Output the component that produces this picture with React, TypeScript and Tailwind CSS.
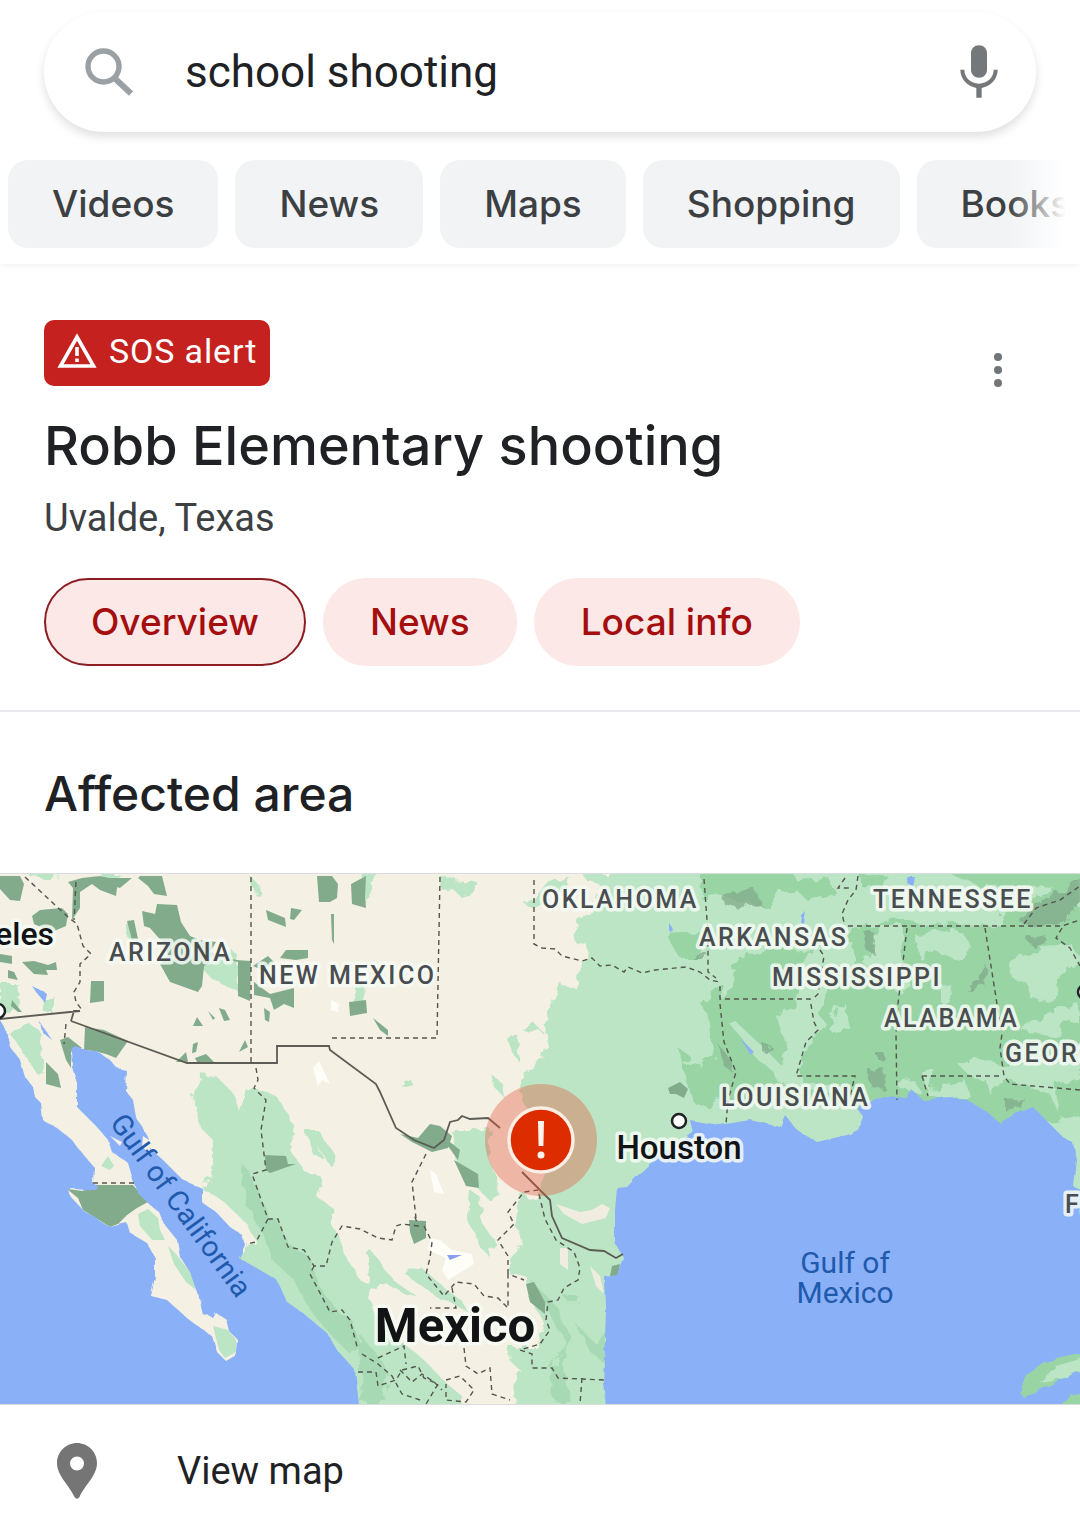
import { useState } from 'react';
import { clsx } from 'clsx';

const searchTabs = ['Videos', 'News', 'Maps', 'Shopping', 'Books'];
const alertTabs = ['Overview', 'News', 'Local info'];

interface MapLabel {
  name: string;
  x: number;
  y: number;
}

const states: MapLabel[] = [
  { name: 'OKLAHOMA', x: 542, y: 34 },
  { name: 'TENNESSEE', x: 873, y: 34 },
  { name: 'ARKANSAS', x: 699, y: 72 },
  { name: 'ARIZONA', x: 109, y: 87 },
  { name: 'NEW MEXICO', x: 259, y: 110 },
  { name: 'MISSISSIPPI', x: 772, y: 112 },
  { name: 'ALABAMA', x: 884, y: 153 },
  { name: 'GEORGIA', x: 1005, y: 188 },
  { name: 'LOUISIANA', x: 721, y: 232 },
  { name: 'FLORIDA', x: 1065, y: 339 },
];

function SearchIcon() {
  return (
    <svg viewBox="0 0 48 48" className="h-12 w-12 shrink-0" fill="none" stroke="#9aa0a3" aria-hidden="true">
      <circle cx="18.500" cy="18.500" r="15.500" strokeWidth="5.400" />
      <path d="M30.500 31L46 45.500" strokeWidth="6" />
    </svg>
  );
}

function MicIcon() {
  return (
    <svg viewBox="0 0 24 24" className="h-16 w-16" fill="#74787b" aria-hidden="true">
      <path d="M12 14.200c1.700 0 3-1.300 3-3V5c0-1.700-1.300-3-3-3S9 3.300 9 5v6.200c0 1.700 1.300 3 3 3z" />
      <path d="M17.500 11.200c0 3-2.500 5.200-5.500 5.200s-5.500-2.200-5.500-5.200H5c0 3.500 2.700 6.300 6 6.800v3.700h2V18c3.300-.5 6-3.300 6-6.800z" />
    </svg>
  );
}

function WarningIcon() {
  return (
    <svg viewBox="0 0 40 36" className="h-9 w-10" aria-hidden="true">
      <path d="M20 4L36.500 33H3.500z" fill="none" stroke="white" strokeWidth="3.600" />
      <path d="M20 14v9M20 25.500v3.500" stroke="white" strokeWidth="3.600" />
    </svg>
  );
}

function PinIcon() {
  return (
    <svg viewBox="0 0 40 56" className="h-14 w-10" aria-hidden="true">
      <path
        fillRule="evenodd"
        fill="#757575"
        d="M20 0C9 0 0 9 0 20c0 13 13 23 17.500 34q2.500 3.500 5 0C27 43 40 33 40 20 40 9 31 0 20 0zm0 13.500a7 7 0 1 1 0 14 7 7 0 0 1 0-14z"
      />
    </svg>
  );
}

function AffectedMap() {
  return (
    <svg viewBox="0 0 1080 530" className="block w-full" fontFamily="Roboto, sans-serif" role="img" aria-label="Map of the affected area">
      <defs>
        <filter id="rough" x="0" y="0" width="1080" height="530" filterUnits="userSpaceOnUse">
          <feTurbulence type="fractalNoise" baseFrequency="0.07" numOctaves="3" seed="4" />
          <feDisplacementMap in="SourceGraphic" scale="14" />
        </filter>
        <filter id="coast" x="0" y="0" width="1080" height="530" filterUnits="userSpaceOnUse">
          <feTurbulence type="fractalNoise" baseFrequency="0.09" numOctaves="2" seed="9" />
          <feDisplacementMap in="SourceGraphic" scale="5" />
        </filter>
      </defs>
      <rect width="1080" height="530" fill="#f4f0e4" />

      {/* Lowland vegetation */}
      <g fill="#bbe5c5" filter="url(#rough)">
        <path d="M612-10L600 16 585 39 573 59 575 68 587 69 586 86 577 96 575 114 559 113 547 133 545 163 542 186 529 194 521 209 518 222 540 250 545 300 535 325 522 322 517 346 520 369 508 383 508 399 529 405 530 425 545 450 537 473 510 473 512 489 520 496 513 509 517 545H1100V-10z" />
        <path d="M200 199L193 223 200 253 213 266 212 299 203 316 222 326 250 353 256 369 236 384 300 440 350 500 355 545H467L463 523 443 506 427 489 403 469 385 450 372 436 370 409 360 406 347 383 334 353 332 333 317 323 322 303 303 296 290 276 297 263 287 239 277 223 263 216 247 216 241 239 233 219 217 203z" />
        <path d="M305 256L318 256 334 280 336 291 330 292 318 272 324 285 312 280z" />
        <path d="M450 256L492 256 488 283 498 306 497 319 487 324 477 313 457 293z" />
        <path d="M470 316L483 326 480 343 495 369 487 374 488 383 480 370 468 346z" />
        <path d="M405 400L420 392 440 410 460 425 470 440 455 432 430 418z" />
        <path d="M370 375L392 405 420 425 405 420 385 408 365 420z" />
        <path d="M442 4L478 8 478 16 460 22 452 14 442 16z" />
        <path d="M525 30L538 20 550 5 570 4 560 16 545 28 530 34zM582-2L612-2 608 14 590 10z" />
        <path d="M521 154L535 150 543 158 530 160zM508 166L520 163 519 188 512 178zM493 202L503 210 505 224 497 216zM403 214L408 203 413 211z" />
        <path d="M0 110L18 110 20 130 12 138 0 142zM10 160L25 146 38 155 45 200 35 198 22 175z" />
        <path d="M200 92L235 78 240 118 215 108zM44 124L54 122 54 140 46 140z" />
        <path d="M370-5L380-5 370 20 362 30 360 12zM354 110L364 110 366 138 354 128z" />
        <path d="M24-5L60-5 50 6 30 2zM100 0L120 0 112 12zM125 50L132 48 136 66 126 62zM252 4L260 12 254 20z" />
      </g>

      {/* Eastern forests */}
      <g fill="#98d4a4" filter="url(#rough)">
        <path d="M722 109L700 129 710 153 714 183 684 193 688 213 698 233 720 226 740 228 865 234 875 222 1000 255 1100 240V40L1060 30 1040 48 980 52 930 50 900 46 862 52 838 62 800 76 770 72 740 84z" />
        <path d="M700-5L790-5 800 12 780 20 770 34 740 28 720 20 700 24zM790 10L830 4 835 18 805 24z" />
        <path d="M666 60L700 58 698 84 680 84 672 72z" />
        <path d="M860 0L890 4 880 14 860 12zM940-5L1080-5 1080 20 1040 12 990 14 960 6zM1000 40L1030 22 1080 8V50H1000z" />
        <path d="M676 172L690 182 685 192z" />
      </g>

      {/* Clearings inside the forest */}
      <g fill="#bbe5c5" filter="url(#rough)">
        <path d="M806 76L850 66 856 86 838 98 822 120 818 140 824 148 808 170 800 190 800 206 838 212 836 222 780 210 772 196 756 184 738 160 726 146 734 146 766 176 780 190 788 170 780 156 776 142 792 134 800 112z" />
        <path d="M880 52L905 52 903 86 910 112 900 120 886 110 866 92 872 70z" />
        <path d="M914 60L960 56 972 74 960 88 936 78 918 84z" />
        <path d="M1008 88L1040 72 1072 70 1080 86 1062 104 1052 128 1032 126 1028 110 1012 104z" />
        <path d="M830 142L846 130 848 150 836 162 828 154z" />
        <path d="M940 110L948 108 950 130 942 130zM956 188L976 184 996 190 1010 194 1040 184 1080 180V206L1054 208 1060 240 1050 220 1010 206 1000 202 992 222 984 204 970 202z" />
        <path d="M1034 150L1062 134 1080 130V150L1062 148 1058 164 1020 156z" />
        <path d="M892 206L912 204 922 220 900 214zM920 196L934 196 930 216 965 206 970 222 930 224z" />
        <path d="M720 90L738 98 732 118 724 128z" />
        <path d="M724 246L750 226 780 234 830 226 860 234 855 262 812 270 796 256 786 240 780 254z" />
      </g>

      {/* Darker western lowland shading */}
      <g fill="#9fd6ad" opacity="0.7" filter="url(#rough)">
        <path d="M240 288L252 300 268 344 276 345 288 370 310 384 318 410 338 438 352 446 362 476 350 480 330 460 310 436 292 404 270 384 262 358 246 330z" />
        <path d="M530 405L550 440 566 470 552 496 556 528 570 528 562 490 570 462 556 432z" />
        <path d="M576 450L590 478 606 490 606 456 596 470zM562 420L578 422 580 430 566 426z" />
        <path d="M360 460L376 480 388 500 380 530 362 530z" />
      </g>

      {/* Parks and reserves */}
      <g fill="#82ab8c">
        <path d="M0 2H20L24 10 20 27 10 26 0 15zM32 42L40 36 62 34 68 40 66 52 52 58 34 50zM0 80L12 82 12 90 0 88zM22 88L34 87 48 91 56 88 57 96 46 96 48 101 34 100zM8 96L14 98 18 106 8 104zM12 126L22 138 18 138 11 132z" />
        <path d="M68 8L82 4 100 2 118 6 116 22 100 16 92 10 80 18 80 34 72 46 73 14zM140 2L162 2 167 22 154 20 148 12 138 4zM98 4L132 4 120 14 108 10z" />
        <path d="M127 47L134 46 138 65 132 66zM142 37L155 40 157 30 177 31 181 48 190 62 200 66 216 68 210 78 236 86 251 87 250 127 238 122 238 88 220 84 204 92 202 112 198 118 170 108 160 90 168 82 164 70 150 54 144 52z" />
        <path d="M253 92L268 82 274 88 262 96zM280 84L286 76 308 76 308 84 296 86zM254 108L270 120 294 114 294 134 284 130 274 136 270 124 254 121zM264 134L270 138 269 148 265 146z" />
        <path d="M91 107L104 107 104 127 90 129zM193 152L197 143 203 152zM208 137L215 144 213 146zM219 134L225 136 230 146 224 147zM193 170L198 168 196 178 192 179zM239 178L245 166 248 173zM195 184L206 180 214 188H197zM176 188L186 178 188 188z" />
        <path d="M317 2L332 2 338 10 337 24 330 28 319 28zM351 10L366 2 365 24 366 34 352 30zM266 36L285 44 286 53 268 46zM291 34L302 36 294 46 290 45zM331 40L334 40 334 70 332 66z" />
        <path d="M349 128L366 126 367 139 350 142zM373 144L388 156 388 162 380 156z" />
        <path d="M85 153L104 156 128 167 116 184 106 180 94 177 84 176zM60 166L68 163 82 174 71 176 71 194 66 186zM46 188L58 200 61 214 46 210z" />
        <path d="M67 315L83 317 94 311 133 311 148 328 137 334 127 341 118 350 110 353 83 336 78 324z" />
        <path d="M265 281L286 282 288 290 296 290 270 299 266 296z" />
        <path d="M400 260L418 264 430 250 440 252 452 262 448 274 432 278 412 268zM445 264L460 276 458 286 448 272zM454 286L478 300 479 314 466 312z" />
        <path d="M409 346L426 347 426 364 414 370 410 358zM526 410L534 408 545 428 545 440 530 428zM612 392L620 390 618 402 610 402z" />
        <path d="M668 214L680 208 688 215 684 224 676 220 670 220z" />
      </g>
      <g fill="#82ab8c" opacity="0.75" filter="url(#rough)">
        <path d="M722 20L756 16 762 32 740 34 724 30zM1020 46L1036 30 1060 16 1084 4V30L1060 50 1040 52 1022 50zM864 58L875 58 872 78 866 76zM968 118L985 90 988 100 976 116zM868 196L884 194 886 216 872 214zM1006 226L1024 224 1020 236 1006 238zM765 172L772 172 770 182 765 180zM718 170L734 190 736 202 722 190zM694 78L706 78 704 86 692 84zM878 180L886 180 886 186 878 186zM1028 64L1044 60 1042 70 1030 70z" />
      </g>

      {/* Dry lakes */}
      <g fill="#fffdf8">
        <path d="M313 194L319 187 330 210 322 206 318 212zM331 126L339 130 338 138 331 136z" />
        <path d="M430 296L436 300 444 320 434 318zM430 364L440 366 452 376 472 380 474 390 458 400 448 406 442 396 446 384 428 376z" />
        <path d="M592 336L602 330 610 334 606 344 582 350 564 340 556 330 580 338zM560 374L568 374 568 396 560 390zM590 392L600 402 604 420 596 412z" fill="#f0ede0" />
      </g>

      {/* Sea */}
      <g fill="#8ab1f8" filter="url(#coast)">
        <path d="M-9 146L0 146 6 156 10 173 20 186 25 203 33 213 35 223 41 229 43 246 57 254 72 266 77 273 94 293 93 309 97 311 95 316 67 315 72 324 83 336 110 353 127 349 130 359 147 369 155 384 155 403 151 422 167 426 187 444 213 463 218 479 225 486 237 479 238 466 230 458 227 446 215 438 212 443 203 441 198 419 190 399 180 383 177 366 165 351 160 339 150 331 147 328 137 318 133 306 128 289 112 278 108 266 97 253 77 233 77 209 72 193 71 176 75 173 100 179 110 186 117 194 126 196 125 216 133 226 136 243 148 263 152 276 163 286 183 306 203 315 203 329 217 339 230 353 242 361 245 371 239 384 260 396 277 406 287 428 303 439 327 459 337 476 355 496 360 540H-9z" />
        <path d="M607 540L603 509 605 463 606 436 605 403 617 401 623 383 615 369 615 336 617 314 627 313 643 296 657 283 680 268 693 259 690 246 707 249 720 251 750 246 780 253 785 241 797 256 810 264 817 268 847 261 858 256 863 243 857 234 880 223 907 224 910 214 923 226 950 223 967 226 987 238 1000 249 1013 241 1033 233 1048 248 1063 263 1073 269 1077 286 1074 313 1090 320V540z" />
        <path d="M32 112L46 119 44 128zM40 148L52 166 42 158zM670 50L674 56 670 58zM906 2L914 2 912 12 908 10zM740 164L754 178 750 180zM802 42L806 38 804 50 801 50z" />
      </g>
      <path d="M447 381L462 381 450 386z" fill="#8a9ff0" />
      <path d="M138 340L148 335 158 344 160 356 165 366 152 366 140 352zM168 372L176 380 190 398 196 416 186 408 174 390zM213 452L228 456 236 466 236 478 225 484 219 476zM101 292L108 282 114 292 110 296z" fill="#bbe5c5" />
      <path d="M143 262L152 268 149 280 142 272zM110 262L122 268 120 272z" fill="#f4f0e4" />
      <g filter="url(#coast)">
        <path d="M1020 518L1026 500 1044 488 1090 478V492L1060 506 1040 516 1024 524z" fill="#98d4a4" />
        <path d="M1040 508L1056 492 1090 482V492L1064 504z" fill="#bbe5c5" />
        <path d="M1062 530L1070 520 1090 522V534z" fill="#98d4a4" />
      </g>

      {/* State borders */}
      <g fill="none" stroke="#55544f" strokeWidth="1.400" strokeDasharray="5 4">
        <path d="M25 3L68 43 77 50 83 72 91 80 80 90 80 108 74 118 76 128 82 136M76 8L74 46" />
        <path d="M251 3V188M440 3L437 164H330" />
        <path d="M534 6V70L542 74 555 75 562 82 582 87 592 84 600 92 612 91 624 98 628 93 642 99 655 96 686 93 700 98 710 106 720 108M704 5L708 60 708 98 716 104M720 112V125H810L814 148 818 156 806 168 796 202H855L850 222M720 130L724 168 736 198 728 226 726 250" />
        <path d="M845 4L838 14 850 14M858 2L856 16 848 26 842 40 844 48M848 52H1062L1080 46M820 76L824 82 818 120 812 126M907 54L898 130 896 160 897 226M985 54L997 130 1002 160 1000 174 1004 202 1010 210 1080 216M922 202H1002M922 202L928 222M1062 54L1056 64 1070 74 1080 92M1024 50L1036 34 1060 26 1080 12" />
        <path d="M256 194L258 206 254 214 266 226 261 256 266 296 252 300 268 345 278 345 288 373 304 376 314 392 326 392 332 368 342 352 360 355 378 364 392 366 396 352 402 350 418 352 414 340M268 345L256 368 246 370M314 392L310 400 330 438 342 436 350 446 358 476M66 150L64 170M93 309H134" />
        <path d="M426 280L412 308 416 344M424 352L432 368 430 384 426 400 444 422 456 408 474 410 484 422 498 424 508 434 508 400 524 406M452 414L456 434H430M508 400L508 382 498 366 514 350 508 338 524 318 538 316 545 345 556 366 574 378 580 394 578 406 564 414 558 426 548 428 546 446 550 456 540 470 520 476 532 480 532 494 552 494 558 504 604 506M582 504L580 530M464 474L466 492 478 500 490 494 492 520 510 526M358 498H376L378 512 396 506 402 496 418 492 424 504 438 510 426 530M378 484L404 472 406 490M446 506L460 502 474 516 466 528 446 526 446 510M400 496L412 508 422 500 434 508 442 516M362 480L378 490 392 502 402 520 420 526" />
      </g>

      {/* National border */}
      <path
        d="M0 145L80 137 74 137 71 147M71 147L187 189H277V172H329L330 176 376 210 380 218 396 254 414 266 434 274 444 266 450 248 458 246 462 242 470 245 488 244 500 254M522 298L550 326 552 342 562 364 590 376 604 377 616 384 623 380"
        fill="none"
        stroke="#5c5b55"
        strokeWidth="1.800"
      />

      <g fill="white" stroke="#202124" strokeWidth="2.500">
        <circle cx="679" cy="247" r="7" />
        <circle cx="-2" cy="137" r="7" />
        <circle cx="1085" cy="118" r="7" />
      </g>

      {/* Labels */}
      <g stroke="#f6fbf5" strokeOpacity="0.85" strokeWidth="7" strokeLinejoin="round" paintOrder="stroke">
        <g fill="#4a4d50" fontSize="25" fontWeight="500" className="tracking-widest">
          {states.map((state) => (
            <text key={state.name} x={state.x} y={state.y}>
              {state.name}
            </text>
          ))}
        </g>
        <g fill="#111315" fontWeight="500">
          <text x="54" y="71" fontSize="32" textAnchor="end">Los Angeles</text>
          <text x="679" y="285" fontSize="33" textAnchor="middle">Houston</text>
          <text x="455" y="468" fontSize="49" fontWeight="700" textAnchor="middle">Mexico</text>
        </g>
      </g>
      <g fill="#1f5aad" fontSize="30">
        <text x="845" y="399" textAnchor="middle">Gulf of</text>
        <text x="845" y="429" textAnchor="middle">Mexico</text>
        <text transform="translate(109 249) rotate(54)" fontSize="29">Gulf of California</text>
      </g>

      {/* Alert marker */}
      <circle cx="541" cy="266" r="56" fill="#e3553a" fillOpacity="0.37" />
      <circle cx="541" cy="266" r="32" fill="#dd2c00" stroke="#fbeee4" strokeWidth="3.500" />
      <path d="M538 247h6l-.6 25h-4.800z" fill="#fff5ee" />
      <circle cx="541" cy="281" r="3.500" fill="#fff5ee" />
    </svg>
  );
}

export default function App() {
  const [query, setQuery] = useState('school shooting');
  const [activeTab, setActiveTab] = useState('Overview');

  return (
    <div className="min-h-screen overflow-hidden bg-white font-['Roboto',sans-serif] text-[#202124]">
      {/* Search */}
      <header className="pt-3 pb-4 shadow-[0_2px_6px_rgba(0,0,0,0.05)]">
        <form role="search" className="mx-11 flex h-[120px] items-center rounded-full bg-white pr-[25px] pl-[41px] shadow-[0_5px_10px_rgba(0,0,0,0.12)]">
          <SearchIcon />
          <input
            type="text"
            aria-label="Search"
            value={query}
            onChange={(e) => setQuery(e.target.value)}
            className="ml-[52px] min-w-0 flex-1 bg-transparent text-[44px] outline-none"
          />
          <button type="button" aria-label="Search by voice">
            <MicIcon />
          </button>
        </form>

        <nav className="relative mt-7 overflow-hidden">
          <div className="flex gap-[17px] pl-2">
            {searchTabs.map((tab) => (
              <a
                key={tab}
                href="#"
                className="flex h-[88px] shrink-0 items-center rounded-[20px] bg-[#f1f3f5] px-11 font-['Inter',sans-serif] text-[37px] font-medium text-[#3c4043]"
              >
                {tab}
              </a>
            ))}
          </div>
          <div className="pointer-events-none absolute inset-y-0 right-0 w-[72px] bg-gradient-to-r from-transparent to-white to-80%" />
        </nav>
      </header>

      <main>
        {/* Alert summary */}
        <section className="border-b-2 border-[#e8eaed] px-11 pt-14 pb-11">
          <div className="flex items-start justify-between">
            <div className="flex h-[66px] items-center gap-3 rounded-[10px] bg-[#c5221f] px-[13px] pb-1 text-[34px] tracking-wide text-white">
              <WarningIcon />
              <span>SOS alert</span>
            </div>
            <button type="button" aria-label="More options" className="mt-7 mr-[22px] flex h-11 w-8 items-center justify-center">
              <svg viewBox="0 0 8 36" className="h-9 w-2" fill="#70757a" aria-hidden="true">
                <circle cx="4" cy="5" r="4" />
                <circle cx="4" cy="18" r="4" />
                <circle cx="4" cy="31" r="4" />
              </svg>
            </button>
          </div>
          <h1 className="mt-[18px] font-['Inter',sans-serif] text-[54px] leading-[72px] font-medium">Robb Elementary shooting</h1>
          <p className="mt-3 text-[38px] leading-[48px] text-[#3c4043]">Uvalde, Texas</p>
          <div className="mt-9 flex gap-[17px]">
            {alertTabs.map((tab) => (
              <button
                key={tab}
                type="button"
                onClick={() => setActiveTab(tab)}
                className={clsx(
                  "h-[88px] rounded-full border-2 bg-[#fce8e6] px-[45px] font-['Inter',sans-serif] text-[37px] font-medium text-[#a50e0e]",
                  activeTab === tab ? 'border-[#8c1d22]' : 'border-transparent',
                )}
              >
                {tab}
              </button>
            ))}
          </div>
        </section>

        {/* Affected area */}
        <section>
          <h2 className="px-11 pt-[50px] pb-[47px] font-['Inter',sans-serif] text-[48px] leading-[64px] font-medium">Affected area</h2>
          <div className="border-y border-[#dadce0]">
            <AffectedMap />
          </div>
          <a href="#" className="flex h-[132px] items-center gap-20 px-[57px] text-[38px]">
            <PinIcon />
            <span>View map</span>
          </a>
        </section>
      </main>
    </div>
  );
}
